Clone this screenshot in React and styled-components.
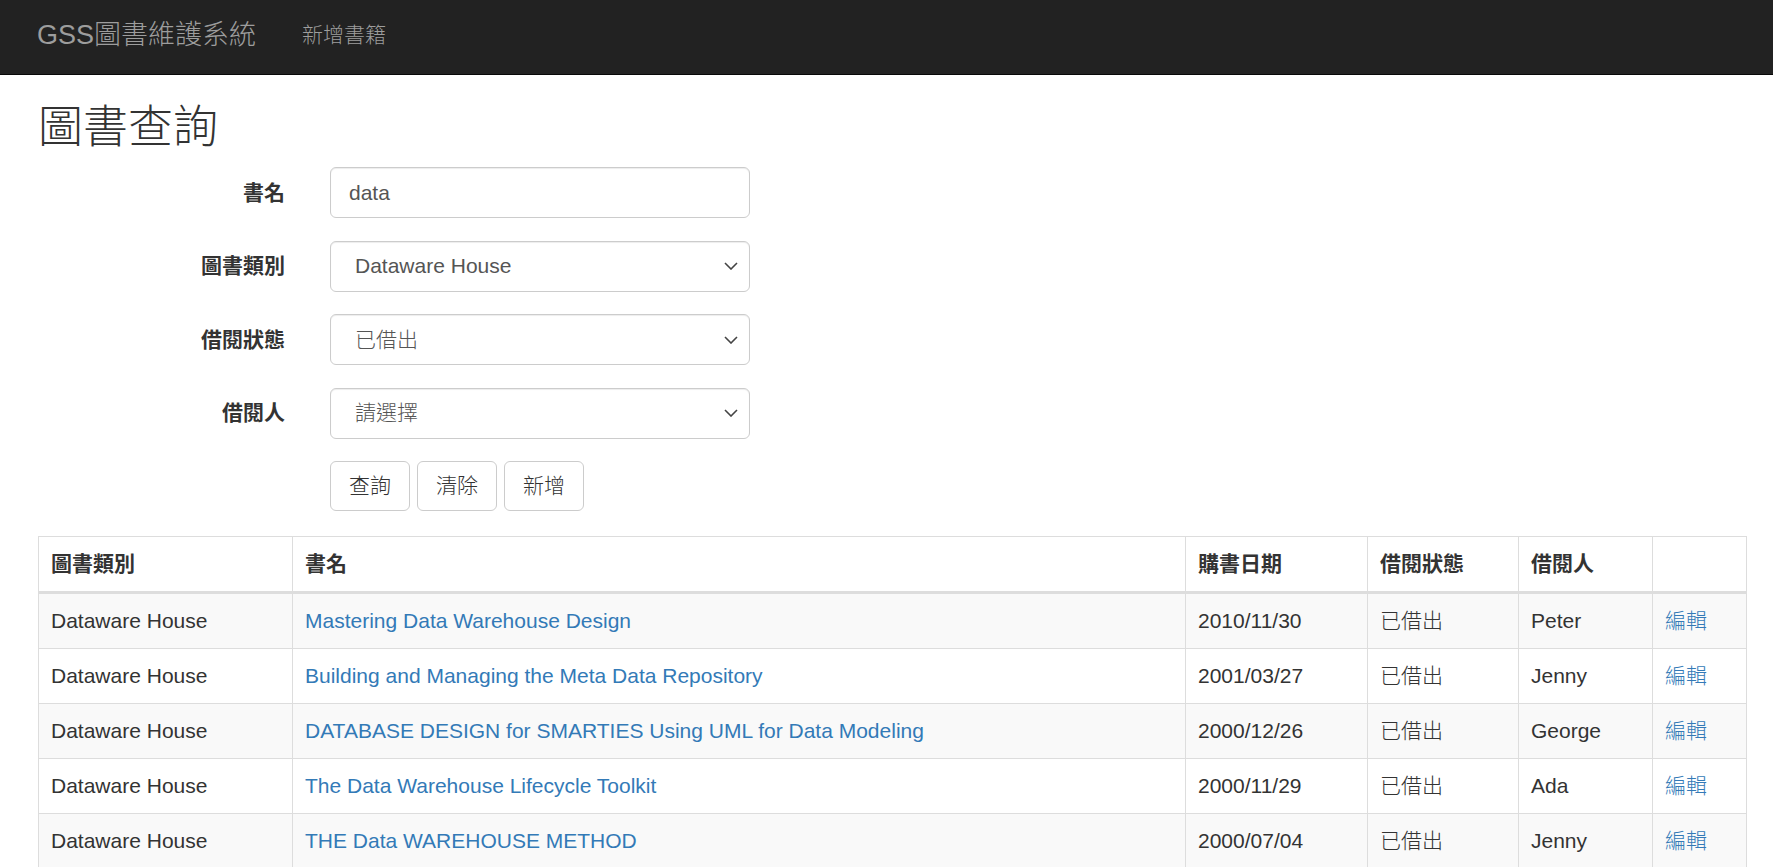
import React from 'react';
import styled, { createGlobalStyle } from 'styled-components';

const GlobalStyle = createGlobalStyle`
  * { box-sizing: border-box; }
  html, body { margin: 0; padding: 0; background: #fff; overflow: hidden; }
  body {
    font-family: "Liberation Sans", "Noto Sans CJK TC", sans-serif;
    font-size: 21px;
    line-height: 30px;
    font-weight: 300;
    color: #333;
  }
`;

const Navbar = styled.nav`
  height: 75px;
  background: #222;
  border-bottom: 1px solid #080808;
  display: flex;
  align-items: center;
  padding-left: 37px;
`;

const Brand = styled.a`
  font-size: 27px;
  line-height: 30px;
  color: #9d9d9d;
  text-decoration: none;
  margin-top: -4px;
`;

const NavLink = styled.a`
  margin-left: 46px;
  font-size: 21px;
  line-height: 30px;
  color: #9d9d9d;
  text-decoration: none;
  margin-top: -4px;
`;

const Main = styled.main`
  padding: 26px 26px 0 38px;
`;

const Title = styled.h2`
  margin: 0 0 12px;
  font-size: 45px;
  line-height: 54px;
  font-weight: 300;
  color: #333;
`;

const Form = styled.form`
  display: grid;
  grid-template-columns: 247px 420px;
  column-gap: 45px;
  row-gap: 22.5px;
  margin-bottom: 25px;
`;

const Label = styled.label`
  text-align: right;
  font-weight: 700;
  padding-top: 10.5px;
  line-height: 30px;
`;

const Input = styled.input`
  display: block;
  width: 420px;
  height: 51px;
  padding: 9px 18px;
  font: inherit;
  font-size: 21px;
  color: #555;
  background: #fff;
  border: 1px solid #ccc;
  border-radius: 6px;
  box-shadow: inset 0 1px 1px rgba(0, 0, 0, 0.075);
  outline: none;
`;

const SelectWrap = styled.div`
  position: relative;
  width: 420px;
`;

const Select = styled.select`
  display: block;
  width: 420px;
  height: 51px;
  padding: 9px 40px 9px 24px;
  font: inherit;
  font-size: 21px;
  color: #555;
  background: #fff;
  border: 1px solid #ccc;
  border-radius: 6px;
  box-shadow: inset 0 1px 1px rgba(0, 0, 0, 0.075);
  outline: none;
  appearance: none;
  -webkit-appearance: none;
`;

const Chevron = styled.svg`
  position: absolute;
  right: 12px;
  top: 50%;
  width: 14px;
  height: 8px;
  margin-top: -4px;
  pointer-events: none;
`;

const Buttons = styled.div`
  grid-column: 2;
  display: flex;
  gap: 7px;
`;

const Button = styled.button`
  font: inherit;
  font-size: 21px;
  line-height: 30px;
  padding: 9px 18px;
  color: #333;
  background: #fff;
  border: 1px solid #ccc;
  border-radius: 6px;
  cursor: pointer;
`;

const Table = styled.table`
  width: 100%;
  border-collapse: collapse;
  border: 1px solid #ddd;
  table-layout: fixed;
`;

const Th = styled.th`
  text-align: left;
  font-weight: 700;
  padding: 12px;
  line-height: 30px;
  border: 1px solid #ddd;
  border-bottom: 3px solid #ddd;
  vertical-align: bottom;
`;

const Tr = styled.tr`
  &:nth-child(odd) { background: #f9f9f9; }
`;

const Td = styled.td`
  padding: 12px;
  line-height: 30px;
  border: 1px solid #ddd;
  vertical-align: top;
  white-space: nowrap;
`;

const Link = styled.a`
  color: #337ab7;
  text-decoration: none;
`;

const rows = [
  ['Mastering Data Warehouse Design', '2010/11/30', 'Peter'],
  ['Building and Managing the Meta Data Repository', '2001/03/27', 'Jenny'],
  ['DATABASE DESIGN for SMARTIES Using UML for Data Modeling', '2000/12/26', 'George'],
  ['The Data Warehouse Lifecycle Toolkit', '2000/11/29', 'Ada'],
  ['THE Data WAREHOUSE METHOD', '2000/07/04', 'Jenny'],
];

const cols = [254, null, 182, 151, 134, 94];

function Dropdown({ value, label }) {
  return (
    <SelectWrap>
      <Select defaultValue={value}>
        <option value={value}>{label}</option>
      </Select>
      <Chevron viewBox="0 0 14 8">
        <path d="M1 1l6 6 6-6" fill="none" stroke="#444" strokeWidth="1.6" />
      </Chevron>
    </SelectWrap>
  );
}

export default function App() {
  return (
    <>
      <GlobalStyle />
      <Navbar>
        <Brand href="#">GSS圖書維護系統</Brand>
        <NavLink href="#">新增書籍</NavLink>
      </Navbar>
      <Main>
        <Title>圖書查詢</Title>
        <Form onSubmit={(e) => e.preventDefault()}>
          <Label>書名</Label>
          <Input defaultValue="data" />
          <Label>圖書類別</Label>
          <Dropdown value="dw" label="Dataware House" />
          <Label>借閱狀態</Label>
          <Dropdown value="out" label="已借出" />
          <Label>借閱人</Label>
          <Dropdown value="" label="請選擇" />
          <Buttons>
            <Button type="button">查詢</Button>
            <Button type="button">清除</Button>
            <Button type="button">新增</Button>
          </Buttons>
        </Form>
        <Table>
          <colgroup>
            {cols.map((w, i) => (
              <col key={i} style={w ? { width: w } : undefined} />
            ))}
          </colgroup>
          <thead>
            <tr>
              <Th>圖書類別</Th>
              <Th>書名</Th>
              <Th>購書日期</Th>
              <Th>借閱狀態</Th>
              <Th>借閱人</Th>
              <Th></Th>
            </tr>
          </thead>
          <tbody>
            {rows.map(([name, date, who], i) => (
              <Tr key={i}>
                <Td>Dataware House</Td>
                <Td><Link href="#">{name}</Link></Td>
                <Td>{date}</Td>
                <Td>已借出</Td>
                <Td>{who}</Td>
                <Td><Link href="#">編輯</Link></Td>
              </Tr>
            ))}
          </tbody>
        </Table>
      </Main>
    </>
  );
}
